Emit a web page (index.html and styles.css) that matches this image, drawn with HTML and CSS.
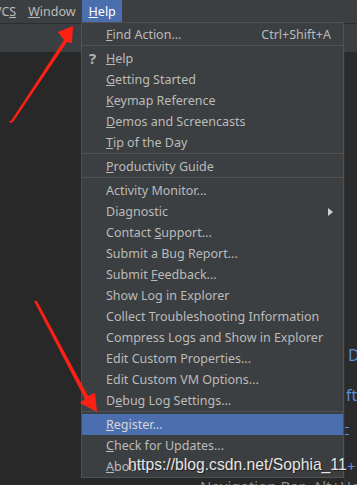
FILE: index.html
```html
<!DOCTYPE html>
<html>
<head>
<meta charset="utf-8">
<link rel="stylesheet" href="styles.css">
</head>
<body>
<div class="screen">
  <div class="menubar">
    <span class="mb-item vcs">VC<u>S</u></span>
    <span class="mb-item"><u>W</u>indow</span>
    <span class="mb-item active"><u>H</u>elp</span>
  </div>
  <div class="toolbar"></div>
  <div class="editor">
    <div class="code">
      <span class="c1">D</span>
      <span class="c2">ft</span>
      <span class="dash d1"></span>
      <span class="dash d2"></span>
      <span class="c4">+</span>
    </div>
    <div class="navhint">Navigation Bar&nbsp;&nbsp;Alt+Home</div>
  </div>

  <div class="popup">
    <div class="item"><span class="label"><u>F</u>ind Action...</span><span class="shortcut">Ctrl+Shift+A</span></div>
    <div class="sep"></div>
    <div class="item"><span class="icon">?</span><span class="label"><u>H</u>elp</span></div>
    <div class="item"><span class="label"><u>G</u>etting Started</span></div>
    <div class="item"><span class="label"><u>K</u>eymap Reference</span></div>
    <div class="item"><span class="label"><u>D</u>emos and Screencasts</span></div>
    <div class="item"><span class="label"><u>T</u>ip of the Day</span></div>
    <div class="sep"></div>
    <div class="item"><span class="label"><u>P</u>roductivity Guide</span></div>
    <div class="sep"></div>
    <div class="item"><span class="label">Activity Monitor...</span></div>
    <div class="item"><span class="label">Diagnostic</span><span class="submenu"></span></div>
    <div class="item"><span class="label">Contact <u>S</u>upport...</span></div>
    <div class="item"><span class="label">Submit a Bug Report...</span></div>
    <div class="item"><span class="label">Submit <u>F</u>eedback...</span></div>
    <div class="item"><span class="label">Show Log in Explorer</span></div>
    <div class="item"><span class="label">Collect Troubleshooting Information</span></div>
    <div class="item"><span class="label">Compress Logs and Show in Explorer</span></div>
    <div class="item"><span class="label">Edit Custom Properties...</span></div>
    <div class="item"><span class="label">Edit Custom VM Options...</span></div>
    <div class="item"><span class="label">D<u>e</u>bug Log Settings...</span></div>
    <div class="sep"></div>
    <div class="item selected"><span class="label"><u>R</u>egister...</span></div>
    <div class="item"><span class="label"><u>C</u>heck for Updates...</span></div>
    <div class="item"><span class="label"><u>A</u>bout</span></div>
  </div>

  <div class="watermark">https://blog.csdn.net/Sophia_11</div>

  <svg class="arrows" width="357" height="485" viewBox="0 0 357 485">
    <polygon fill="#ff2015" points="9,121 11,121 64,40 58,32 73,26 72,43 67,42 13,122 10,123"/>
    <polygon fill="#ff2015" points="34,301 37,301 88,396 95,393 97,412 80,403 85,399 35,303"/>
  </svg>
</div>
</body>
</html>
```
FILE: styles.css
```css
* { box-sizing: border-box; }
html, body { margin: 0; padding: 0; }
body {
  background: #282828;
  font-family: "Noto Sans", "Open Sans", sans-serif;
  font-size: 12.5px;
  color: #bbbbbb;
}
.screen {
  position: relative;
  width: 357px;
  height: 485px;
  overflow: hidden;
}
.menubar {
  height: 24px;
  background: #3c3f41;
  border-bottom: 1px solid #2e2e2e;
  display: flex;
  align-items: stretch;
}
.mb-item {
  display: flex;
  align-items: center;
  padding: 0 6px;
  color: #bbbbbb;
  height: 23px;
}
.mb-item.vcs { margin-left: -12px; }
.mb-item.active {
  background: #4b6eaf;
  color: #ffffff;
  padding: 0 6px 0 7px;
}
.toolbar {
  height: 28px;
  background: #3c3f41;
}
.editor {
  position: relative;
  height: 433px;
  background: #282828;
}
.code {
  position: absolute;
  left: 344px;
  top: 0;
  width: 13px;
  height: 433px;
  background: #2b2b2b;
  border-left: 1px solid #323232;
  font-size: 16px;
  color: #5a8fd8;
}
.code span { position: absolute; }
.code .c1 { left: 3px; top: 292px; }
.code .c2 { left: 1px; top: 332px; }
.code .dash { left: 0; width: 4px; height: 1px; background: #5a8fd8; }
.code .d1 { top: 375px; }
.code .d2 { top: 382px; }
.code .c4 { left: 2px; top: 404px; font-size: 15px; color: #4f8fe0; }
.navhint {
  position: absolute;
  left: 200px;
  top: 424px;
  color: #8a8a8a;
  font-size: 15px;
  white-space: nowrap;
}
.popup {
  position: absolute;
  left: 81px;
  top: 22px;
  width: 263px;
  background: #3c3f41;
  border: 1px solid #515151;
  padding: 1px 0 0 0;
}
.item {
  position: relative;
  height: 21px;
  display: flex;
  align-items: center;
  padding-left: 24px;
  padding-right: 12px;
  white-space: nowrap;
  color: #bbbbbb;
}
.item.selected { background: #4b6eaf; color: #d6d6d6; }
.label { flex: 1; }
.shortcut { color: #bbbbbb; }
.icon {
  position: absolute;
  left: 7px;
  top: 0;
  line-height: 21px;
  font-weight: bold;
  font-size: 15px;
  color: #afb1b3;
}
.submenu {
  width: 0;
  height: 0;
  border-top: 4px solid transparent;
  border-bottom: 4px solid transparent;
  border-left: 5px solid #d0d0d0;
  margin-right: -2px;
}
.sep {
  height: 3px;
  border-top: 1px solid #515151;
  margin-top: 0;
}
.watermark {
  position: absolute;
  left: 128px;
  top: 456px;
  font-family: "Liberation Sans", Arial, sans-serif;
  font-size: 15.7px;
  color: #e6e6e6;
  text-shadow: 1px 1px 1px #222222;
  white-space: nowrap;
}
.arrows {
  position: absolute;
  left: 0;
  top: 0;
}
```
